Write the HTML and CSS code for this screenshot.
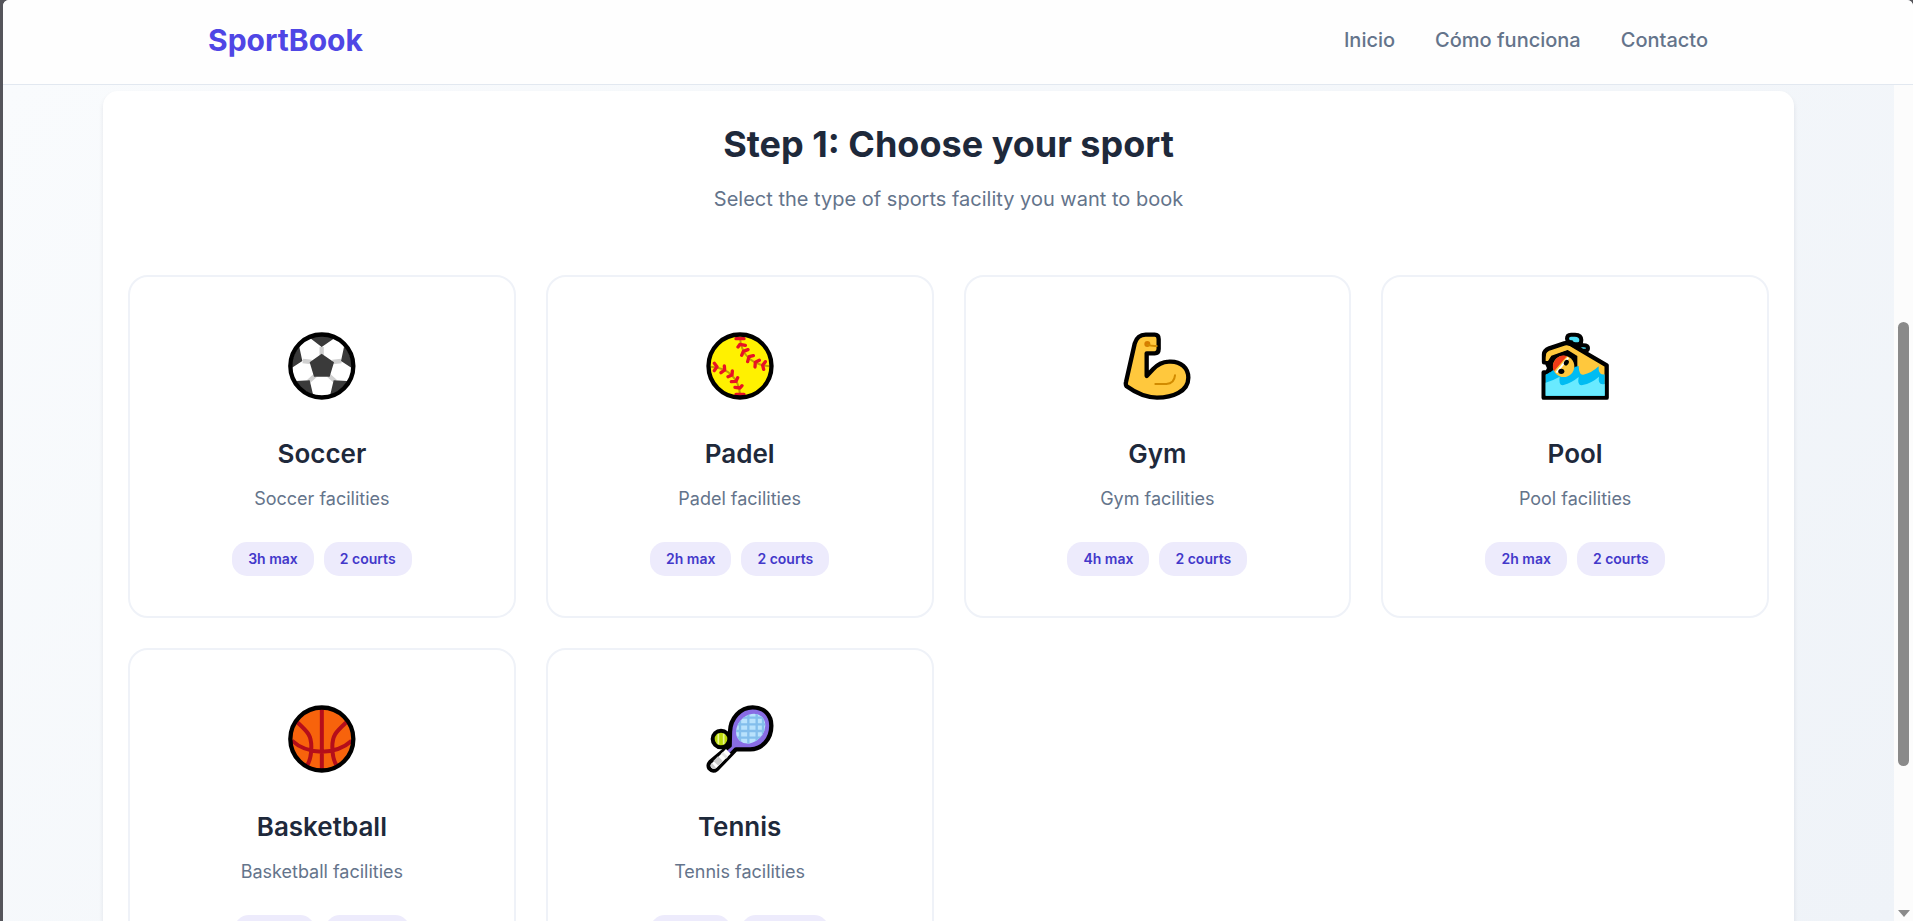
FILE: index.html
```html
<!DOCTYPE html>
<html lang="es">
<head>
<meta charset="utf-8">
<title>SportBook</title>
<link rel="stylesheet" href="styles.css">
</head>
<body>
<div class="window">
  <header class="header">
    <a class="logo">SportBook</a>
    <nav class="nav"><a>Inicio</a><a>Cómo funciona</a><a>Contacto</a></nav>
  </header>
  <div class="viewport">
    <main class="page">
      <section class="panel">
        <h2 class="title">Step 1: Choose your sport</h2>
        <p class="subtitle">Select the type of sports facility you want to book</p>
        <div class="grid">
          <article class="card">
            <svg class="icon" viewBox="54 50 204 204">
              <defs><clipPath id="ball"><circle cx="155.500" cy="152" r="90"/></clipPath></defs>
              <circle cx="155.500" cy="152" r="95" fill="#fff"/>
              <g clip-path="url(#ball)">
                <path d="M155 95v24M98 137l27 3M214 137l-27 3M116 198l20-18M196 198l-20-18" stroke="#d0d0d0" stroke-width="13"/>
                <path fill="#3a3a3a" d="M155 115l37 26-13 43h-47l-13-43zM123 70l32 25 36-25-10-20h-50zM88 95l9 42-31 20-25-30zM222 95l-9 42 31 20 25-30zM66 190l13 7 40-2 11 46-40 10zM244 190l-13 7-40-2-11 46 40 10z"/>
              </g>
              <circle cx="155.500" cy="152" r="94.500" fill="none" stroke="#000" stroke-width="13"/>
            </svg>
            <h3 class="name">Soccer</h3><p class="desc">Soccer facilities</p>
            <div class="badges"><span class="badge">3h max</span><span class="badge">2 courts</span></div>
          </article>
          <article class="card">
            <svg class="icon" viewBox="47 50 204 204">
              <circle cx="149" cy="152" r="95" fill="#fff100"/>
              <g fill="none" stroke="#c19c00" stroke-width="6"><path d="M149 66c3 52 35 82 90 87M60 154c54 3 86 35 89 84"/></g>
              <g fill="none" stroke="#e81224" stroke-width="10" stroke-linecap="round" stroke-linejoin="round">
                <path d="M137 70h24M143 95l6-8 16 3M154 120l5-12 14-5M172 139l4-15 13-3M194 155l1-14 12-6M220 162l-3-12 8-11M72 144l8 10-8 12M102 152l1 12-11 8M126 167l-1 12-12 5M142 187l-5 11-14 1M155 211l-6 7-15-2M137 237h24"/>
              </g>
              <circle cx="149" cy="152" r="94.500" fill="none" stroke="#000" stroke-width="13"/>
            </svg>
            <h3 class="name">Padel</h3><p class="desc">Padel facilities</p>
            <div class="badges"><span class="badge">2h max</span><span class="badge">2 courts</span></div>
          </article>
          <article class="card">
            <svg class="icon" viewBox="55 50 204 204">
              <path d="M64 200L90 85Q98 58 123 58H150Q162 58 162 71V101Q162 114 150 114H126V182L145 162Q165 140 192 139C230 136 251 160 251 187C251 229 203 247 157 247Q111 246 66 213Q62 208 64 200Z" fill="#ffc83d" stroke="#000" stroke-width="13" stroke-linejoin="round"/>
              <circle cx="128" cy="86" r="9" fill="#d67d00"/>
              <path d="M128 88q12 5 28 4M152 206h33q24-2 26-26" fill="none" stroke="#d18b00" stroke-width="6" stroke-linecap="round"/>
            </svg>
            <h3 class="name">Gym</h3><p class="desc">Gym facilities</p>
            <div class="badges"><span class="badge">4h max</span><span class="badge">2 courts</span></div>
          </article>
          <article class="card">
            <svg class="icon" viewBox="63 50 204 204">
              <path d="M141 70Q141 58 153 58H165Q184 59 184 74Q184 87 174 87H167Q158 87 154 81Q142 81 141 70ZM174 90H190Q204 90 204 98Q204 106 196 106H190Q180 106 174 90Z" fill="#4cddf5" stroke="#000" stroke-width="12"/>
              <path d="M71 247V171H82L88 158L80 141H72V117Q72 106 88 99L133 84Q142 81 151 86L260 150V247Z" fill="#ffc83d" stroke="#000" stroke-width="13" stroke-linejoin="round"/>
              <path d="M80 138L94 119L142 103L172 122V168L90 178L88 158Z" fill="#000"/>
              <path d="M77 127Q77 114 90 108L138 92L152 95L165 104L142 104L94 121L84 137H77Z" fill="#ffc83d"/>
              <path d="M77 178Q92 171 101 163L130 180L166 154L176 152Q177 180 190 178Q214 174 236 153Q234 181 254 177V241H77Z" fill="#00bcf2"/>
              <path d="M77 202Q100 195 119 184Q115 213 131 209Q154 203 176 185Q171 213 188 209Q214 204 237 184Q232 211 254 206V241H77Z" fill="#69eaff"/>
              <circle cx="131" cy="153" r="32" fill="#ffc83d"/>
              <path d="M102 168A33 33 0 0 1 141 122Z" fill="#f03a17"/>
              <path d="M109 172L145 127" stroke="#fff" stroke-width="6"/>
              <ellipse cx="124" cy="168" rx="9" ry="8" fill="#000"/><ellipse cx="139" cy="142" rx="7" ry="9" transform="rotate(30 139 142)" fill="#000"/>
            </svg>
            <h3 class="name">Pool</h3><p class="desc">Pool facilities</p>
            <div class="badges"><span class="badge">2h max</span><span class="badge">2 courts</span></div>
          </article>
          <article class="card">
            <svg class="icon" viewBox="54 44 204 204">
              <circle cx="155.500" cy="146" r="95" fill="#f7630c"/>
              <path d="M155.500 56v180M66 151Q100 183 155 184Q210 183 245 151M82 96C113 125 124 134 124 170Q124 205 111 226M229 96C198 125 187 134 187 170Q187 205 200 226" fill="none" stroke="#b50e1a" stroke-width="12"/>
              <circle cx="155.500" cy="146" r="94.500" fill="none" stroke="#000" stroke-width="13"/>
            </svg>
            <h3 class="name">Basketball</h3><p class="desc">Basketball facilities</p>
            <div class="badges"><span class="badge">2h max</span><span class="badge">1 courts</span></div>
          </article>
          <article class="card">
            <svg class="icon" viewBox="47 44 204 204">
              <path d="M118 166L119 124C120 84 150 51 187 51C222 51 243 74 243 106C243 146 216 176 180 177H137L80 236Q68 246 58 235Q51 225 60 215Z" fill="#886ce4" stroke="#000" stroke-width="13" stroke-linejoin="round"/>
              <path d="M107 176L121 190L79 232Q70 239 63 232Q57 225 65 218Z" fill="#fff"/>
              <path d="M83 198l15 15-14 13-15-14z" fill="#ccc"/>
              <path d="M65 218l12 14q-8 5-14-1t2-13z" fill="#ccc"/>
              <path d="M98 185l15 14-6 6-15-14z" fill="#e6e6e6"/>
              <clipPath id="strings"><ellipse cx="181" cy="115" rx="39" ry="49" transform="rotate(42 181 115)"/></clipPath>
              <g clip-path="url(#strings)"><path fill="#b9e2fc" d="M130 60h110v110H130z"/><path d="M149 60v110M174 60v110M199 60v110M218 60v110M130 82h110M130 102h110M130 122h110M130 142h110" stroke="#83beec" stroke-width="7"/></g>
              <circle cx="92" cy="146" r="25" fill="#bad80a" stroke="#000" stroke-width="12"/>
              <path d="M84 130v32M100 130v32" stroke="#e8f58d" stroke-width="5"/>
            </svg>
            <h3 class="name">Tennis</h3><p class="desc">Tennis facilities</p>
            <div class="badges"><span class="badge">2h max</span><span class="badge">2 courts</span></div>
          </article>
        </div>
      </section>
    </main>
    <div class="scrollbar"><div class="thumb"></div><div class="arrow"></div></div>
  </div>
</div>
</body>
</html>
```

FILE: styles.css
```css
* { box-sizing: border-box; }
body { margin: 0; height: 921px; overflow: hidden; background: #55555b; font-family: Inter, "Liberation Sans", sans-serif; padding-left: 3px; }
.window { height: 921px; overflow: hidden; border-radius: 6px 6px 0 0; background: #fff; display: flex; flex-direction: column; }
.header { flex: none; height: 85px; border-bottom: 1px solid #e2e8f0; padding: 0 205px 4px; display: flex; align-items: center; justify-content: space-between; background: #fefefe; }
.logo { font-size: 30px; font-weight: 700; color: #4f46e5; }
.nav { display: flex; gap: 40px; font-size: 20px; font-weight: 500; color: #64748b; }
.viewport { flex: 1; min-height: 0; display: flex; }
.page { flex: 1; padding: 6px 100px 0; overflow: hidden; background: linear-gradient(135deg, #f9fbfd 0%, #eff3f8 100%); }
.panel { height: 1000px; background: #fff; border-radius: 15px; padding: 31px 25px; box-shadow: 0 3px 5px rgba(15, 23, 42, .09); text-align: center; }
.title { margin: 0; font-size: 36px; line-height: 44px; font-weight: 700; color: #1e293b; }
.subtitle { margin: 18px 0 61px; font-size: 20px; line-height: 30px; color: #64748b; }
.grid { display: grid; grid-template-columns: repeat(4, 1fr); gap: 30px; }
.card { height: 343px; border: 2px solid #eff2f8; border-radius: 20px; padding-top: 55px; }
.icon { display: block; width: 68px; height: 68px; margin: 0 auto; }
.name { margin: 38px 0 0; font-size: 26px; line-height: 32px; font-weight: 600; color: #1e293b; }
.desc { margin: 16px 0 30px; font-size: 18px; line-height: 26px; color: #64748b; }
.badges { display: flex; justify-content: center; gap: 10px; }
.badge { height: 34px; line-height: 34px; padding: 0 16px; border-radius: 15px; background: #edebfc; color: #4338ca; font-size: 14px; font-weight: 600; }
.scrollbar { width: 19px; padding: 237px 4px 4px; background: #fcfcfc; display: flex; flex-direction: column; justify-content: space-between; align-items: center; }
.thumb { width: 11px; height: 444px; border-radius: 6px; background: #8a8a8a; }
.arrow { border: 6.5px solid transparent; border-top: 7px solid #8a8a8a; border-bottom: 0; }
```
